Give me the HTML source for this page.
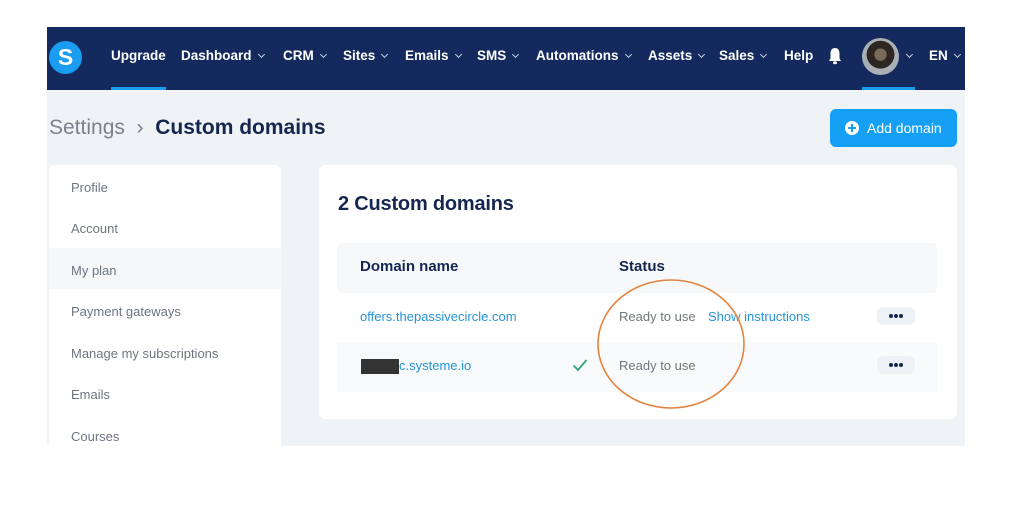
<!DOCTYPE html>
<html><head><meta charset="utf-8"><style>
*{margin:0;padding:0;box-sizing:border-box}
body{width:1024px;height:527px;background:#fff;font-family:"Liberation Sans",sans-serif;position:relative;overflow:hidden}
.shot{position:absolute;left:47px;top:27px;width:918px;height:419px;background:#eff3f6;overflow:hidden}
.nav{position:absolute;left:0;top:0;width:918px;height:63px;background:#142a5e}
.logo{position:absolute;left:2px;top:14px;width:33px;height:33px;border-radius:50%;background:#1a9cf0;color:#fff;font-weight:bold;font-size:23px;text-align:center;line-height:33px}
.ni{position:absolute;top:21px;color:#fff;font-weight:bold;font-size:13.5px;white-space:nowrap}
.ch{display:inline-block;width:5px;height:5px;border-right:1.3px solid #c8d0e0;border-bottom:1.3px solid #c8d0e0;transform:rotate(45deg);margin-left:7px;position:relative;top:-3px}
.ul{position:absolute;top:60px;height:3px;background:#1a9cf0}
.bc{position:absolute;left:2px;top:89px;font-size:21px;color:#7b828c}
.bc b{color:#15264f}
.btn{position:absolute;left:783px;top:82px;width:127px;height:38px;background:#16a0f5;border-radius:6px;color:#fff;font-size:14px;line-height:38px;padding-left:37px}
.btn i{position:absolute;left:15px;top:12px;width:14px;height:14px;border-radius:50%;background:#fff}
.btn i:before{content:"";position:absolute;left:3px;top:6px;width:8px;height:2px;background:#16a0f5}
.btn i:after{content:"";position:absolute;left:6px;top:3px;width:2px;height:8px;background:#16a0f5}
.side{position:absolute;left:2px;top:138px;width:232px;height:290px;background:#fff;border-radius:6px}
.si{position:absolute;left:22px;font-size:13px;color:#6e7580}
.card{position:absolute;left:272px;top:138px;width:638px;height:254px;background:#fff;border-radius:6px}
.h2{position:absolute;left:19px;top:28px;font-size:20px;color:#15264f;font-weight:bold;letter-spacing:-0.2px}
.thead{position:absolute;left:18px;top:78px;width:600px;height:50px;background:#f6f8fa;border-radius:4px}
.th{position:absolute;top:15px;font-size:15px;font-weight:bold;color:#15264f}
.row2{position:absolute;left:18px;top:177px;width:600px;height:50px;background:#f8fafb}
.t{position:absolute;font-size:13px;white-space:nowrap}
.blue{color:#2593d6}.gray{color:#70767e}
.dots{position:absolute;width:38px;height:18px;background:#eef2f6;border-radius:6px}
.dots i{position:absolute;top:7px;width:4px;height:4px;border-radius:50%;background:#15264f}
</style></head><body>
<div class="shot">
 <div class="nav">
  <div class="logo">S</div>
  <div class="ni" style="left:64px">Upgrade</div>
  <div class="ni" style="left:134px">Dashboard<span class="ch"></span></div>
  <div class="ni" style="left:236px">CRM<span class="ch"></span></div>
  <div class="ni" style="left:296px">Sites<span class="ch"></span></div>
  <div class="ni" style="left:358px">Emails<span class="ch"></span></div>
  <div class="ni" style="left:430px">SMS<span class="ch"></span></div>
  <div class="ni" style="left:489px">Automations<span class="ch"></span></div>
  <div class="ni" style="left:601px">Assets<span class="ch"></span></div>
  <div class="ni" style="left:672px">Sales<span class="ch"></span></div>
  <div class="ni" style="left:737px">Help</div>
  <svg style="position:absolute;left:780px;top:20px" width="16" height="18" viewBox="0 0 16 18"><path d="M8 1C4.5 1 3.5 3.8 3.5 6.5V11.5L2 14H14L12.5 11.5V6.5C12.5 3.8 11.5 1 8 1Z" fill="#fff"/><ellipse cx="8" cy="15.8" rx="2" ry="1.5" fill="#fff"/></svg>
  <div style="position:absolute;left:815px;top:11px;width:37px;height:37px;border-radius:50%;background:radial-gradient(circle at 50% 45%,#7a6a5a 0 22%,#2e2620 23% 50%,#a8b0b6 51%)"></div>
  <div class="ni" style="left:853px"><span class="ch"></span></div>
  <div class="ni" style="left:882px">EN<span class="ch"></span></div>
  <div class="ul" style="left:64px;width:55px"></div>
  <div class="ul" style="left:815px;width:53px"></div>
 </div>
 <div class="bc">Settings &nbsp;›&nbsp; <b>Custom domains</b></div>
 <div class="btn"><i></i>Add domain</div>
 <div class="side">
  <div style="position:absolute;left:0;top:83px;width:232px;height:41px;background:#f5f7f9"></div>
  <div class="si" style="top:15px">Profile</div>
  <div class="si" style="top:56px">Account</div>
  <div class="si" style="top:98px">My plan</div>
  <div class="si" style="top:139px">Payment gateways</div>
  <div class="si" style="top:181px">Manage my subscriptions</div>
  <div class="si" style="top:222px">Emails</div>
  <div class="si" style="top:264px">Courses</div>
 </div>
 <div class="card">
  <div class="h2">2 Custom domains</div>
  <div class="thead"><div class="th" style="left:23px">Domain name</div><div class="th" style="left:282px">Status</div></div>
  <div class="t blue" style="left:41px;top:144px">offers.thepassivecircle.com</div>
  <div class="t gray" style="left:300px;top:144px">Ready to use</div>
  <div class="t blue" style="left:389px;top:144px">Show instructions</div>
  <div class="dots" style="left:558px;top:142px"><i style="left:12px"></i><i style="left:17px"></i><i style="left:22px"></i></div>
  <div class="row2"></div>
  <div style="position:absolute;left:42px;top:194px;width:38px;height:15px;background:#333"></div>
  <div class="t blue" style="left:80px;top:193px">c.systeme.io</div>
  <svg style="position:absolute;left:253px;top:193px" width="16" height="14" viewBox="0 0 16 14"><path d="M1.5 7.5L6 12L14.5 2" fill="none" stroke="#2fa67a" stroke-width="1.8"/></svg>
  <div class="t gray" style="left:300px;top:193px">Ready to use</div>
  <div class="dots" style="left:558px;top:191px"><i style="left:12px"></i><i style="left:17px"></i><i style="left:22px"></i></div>
 </div>
</div>
<svg style="position:absolute;left:0;top:0" width="1024" height="527"><ellipse cx="671" cy="344" rx="73" ry="64" fill="none" stroke="#e2843f" stroke-width="1.6"/></svg>
</body></html>
